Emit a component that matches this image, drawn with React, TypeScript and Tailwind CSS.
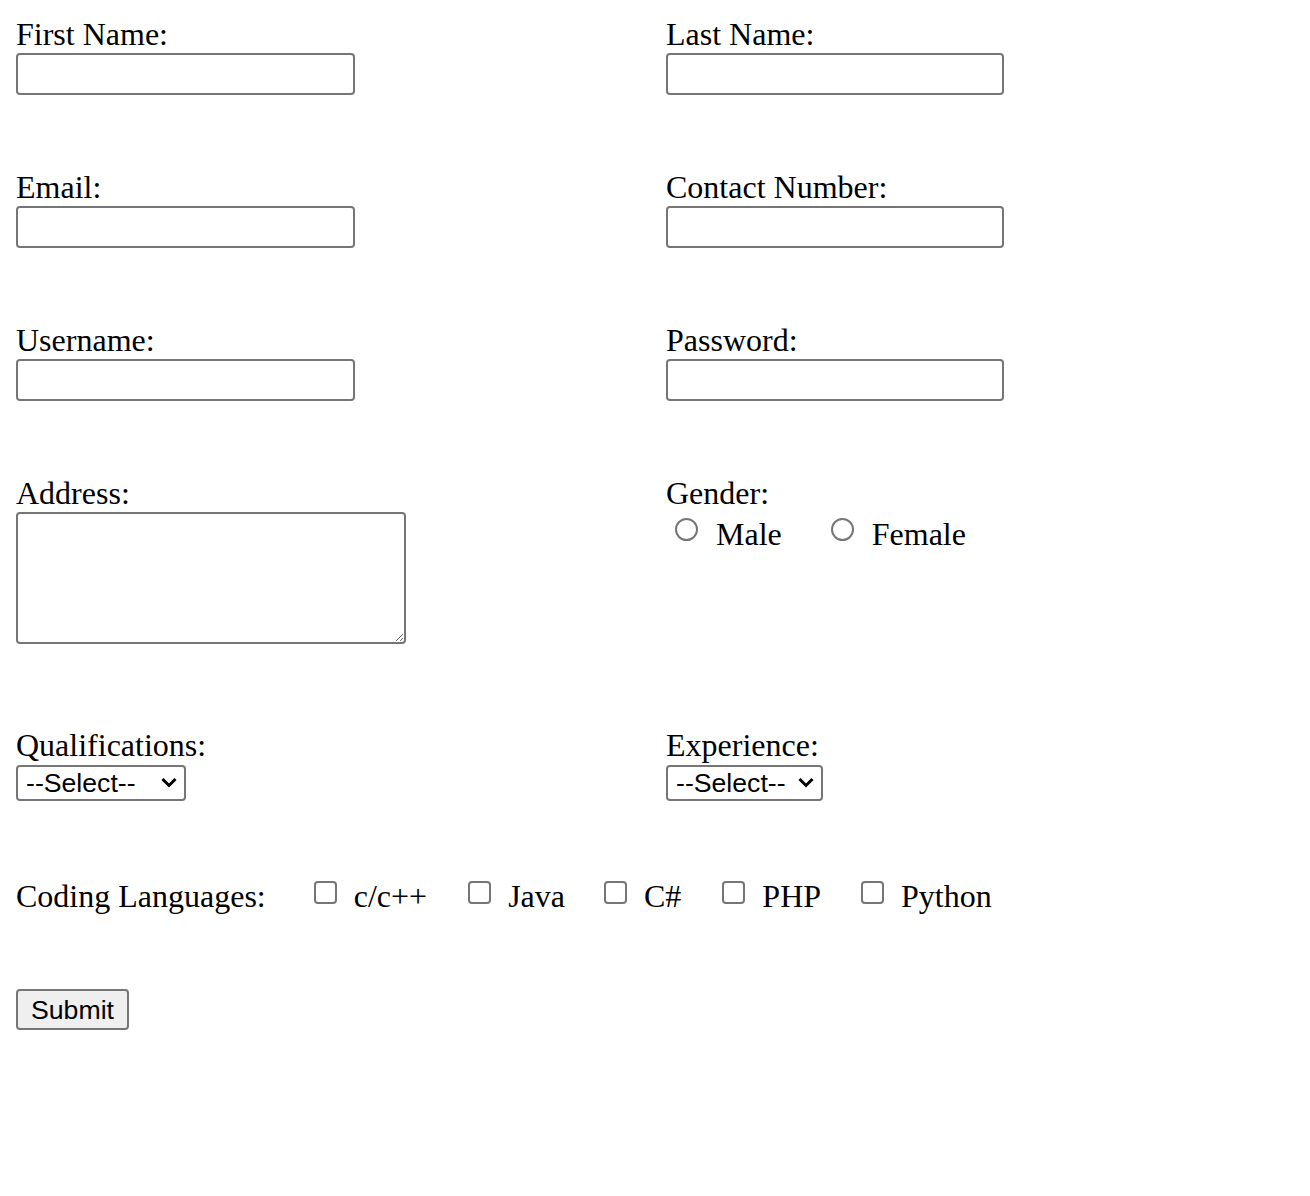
import { ReactNode } from "react";

const field = "block bg-white border-2 border-[#767676] rounded-[4px]";

function Label({ children }: { children: ReactNode }) {
  return <div className="leading-[37px] h-[37px]">{children}</div>;
}

function Chevron() {
  return (
    <svg width="16" height="11" viewBox="0 0 16 11" className="pointer-events-none absolute top-[12px] right-[9px]">
      <path d="M1.5 2 L8 8.5 L14.5 2" fill="none" stroke="#000" strokeWidth="3" />
    </svg>
  );
}

function Select({ width }: { width: string }) {
  return (
    <div className={`relative mt-[1px] h-[36px] ${width}`}>
      <select className="block appearance-none w-full h-[36px] pl-[8px] border-2 border-[#767676] rounded-[4px] bg-white text-black font-['Liberation_Sans',Arial,sans-serif] text-[26.67px] leading-[30px]">
        <option>--Select--</option>
      </select>
      <Chevron />
    </div>
  );
}

function Check({ label, ml }: { label: string; ml: string }) {
  return (
    <label className={`flex items-start ${ml}`}>
      <input type="checkbox" className="appearance-none mt-[3px] w-[23px] h-[23px] border-2 border-[#767676] rounded-[4px] bg-white" />
      <span className="ml-[17px]">{label}</span>
    </label>
  );
}

function Radio({ label, ml }: { label: string; ml: string }) {
  return (
    <label className={`flex items-start ${ml}`}>
      <input type="radio" name="gender" className="appearance-none mt-[2px] w-[23px] h-[23px] border-2 border-[#767676] rounded-full bg-white" />
      <span className="ml-[18px]">{label}</span>
    </label>
  );
}

export default function App() {
  return (
    <form className="min-h-[1196px] bg-white p-4 text-black text-[32px] font-['Liberation_Serif','Times_New_Roman',serif]">
      {[
        ["First Name:", "Last Name:", "text"],
        ["Email:", "Contact Number:", "text"],
        ["Username:", "Password:", "password"],
      ].map(([a, b, t]) => (
        <div key={a} className="grid grid-cols-[650px_1fr] mb-[74px]">
          <div>
            <Label>{a}</Label>
            <input type="text" className={`${field} w-[339px] h-[42px]`} />
          </div>
          <div>
            <Label>{b}</Label>
            <input type={t} className={`${field} w-[338px] h-[42px]`} />
          </div>
        </div>
      ))}

      {/* address + gender */}
      <div className="grid grid-cols-[650px_1fr] mb-[83px]">
        <div>
          <Label>Address:</Label>
          <textarea className={`${field} w-[390px] h-[132px]`} />
        </div>
        <div>
          <Label>Gender:</Label>
          <div className="flex leading-[37px] mt-[4px]">
            <Radio label="Male" ml="ml-[9px]" />
            <Radio label="Female" ml="ml-[49px]" />
          </div>
        </div>
      </div>

      <div className="grid grid-cols-[650px_1fr] mb-[77px]">
        <div>
          <Label>Qualifications:</Label>
          <Select width="w-[170px]" />
        </div>
        <div>
          <Label>Experience:</Label>
          <Select width="w-[157px]" />
        </div>
      </div>

      <div className="flex leading-[37px] h-[37px] mb-[74px]">
        <span>Coding Languages:</span>
        <Check label="c/c++" ml="ml-[48px]" />
        <Check label="Java" ml="ml-[41px]" />
        <Check label="C#" ml="ml-[39px]" />
        <Check label="PHP" ml="ml-[41px]" />
        <Check label="Python" ml="ml-[40px]" />
      </div>

      <button type="submit" className="block w-[113px] h-[41px] bg-[#efefef] border-2 border-[#767676] rounded-[4px] font-['Liberation_Sans',Arial,sans-serif] text-[26.67px] leading-[30px]">
        Submit
      </button>
    </form>
  );
}
